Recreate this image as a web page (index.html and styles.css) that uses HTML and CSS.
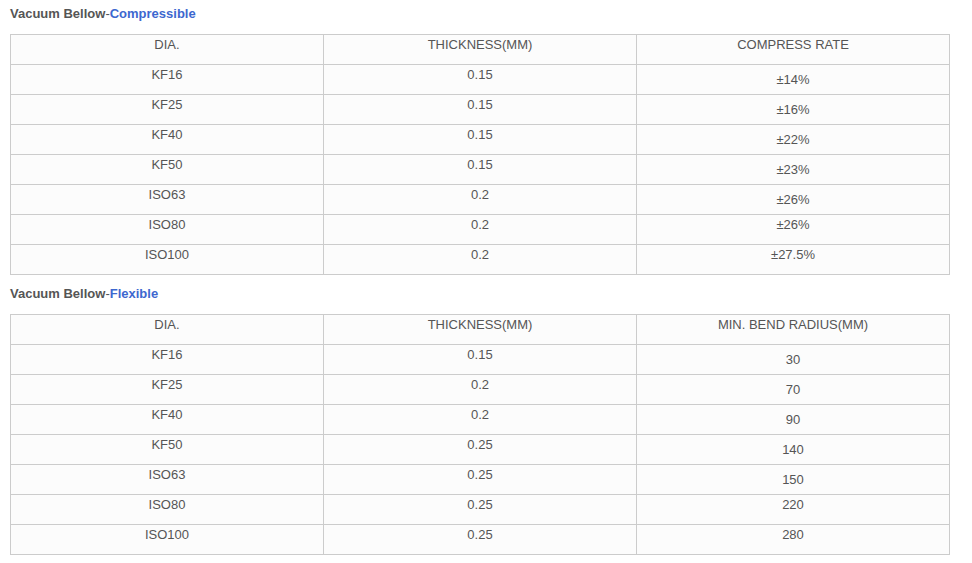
FILE: index.html
```html
<!DOCTYPE html>
<html>
<head>
<meta charset="utf-8">
<link rel="stylesheet" href="styles.css">
</head>
<body>
<div class="page">
  <h3 class="title">Vacuum Bellow<span class="dash">-</span><span class="accent">Compressible</span></h3>
  <table class="spec">
    <tr><td>DIA.</td><td>THICKNESS(MM)</td><td>COMPRESS RATE</td></tr>
    <tr><td>KF16</td><td>0.15</td><td class="low">±14%</td></tr>
    <tr><td>KF25</td><td>0.15</td><td class="low">±16%</td></tr>
    <tr><td>KF40</td><td>0.15</td><td class="low">±22%</td></tr>
    <tr><td>KF50</td><td>0.15</td><td class="low">±23%</td></tr>
    <tr><td>ISO63</td><td>0.2</td><td class="low">±26%</td></tr>
    <tr><td>ISO80</td><td>0.2</td><td>±26%</td></tr>
    <tr><td>ISO100</td><td>0.2</td><td>±27.5%</td></tr>
  </table>
  <h3 class="title">Vacuum Bellow<span class="dash">-</span><span class="accent">Flexible</span></h3>
  <table class="spec">
    <tr><td>DIA.</td><td>THICKNESS(MM)</td><td>MIN. BEND RADIUS(MM)</td></tr>
    <tr><td>KF16</td><td>0.15</td><td class="low">30</td></tr>
    <tr><td>KF25</td><td>0.2</td><td class="low">70</td></tr>
    <tr><td>KF40</td><td>0.2</td><td class="low">90</td></tr>
    <tr><td>KF50</td><td>0.25</td><td class="low">140</td></tr>
    <tr><td>ISO63</td><td>0.25</td><td class="low">150</td></tr>
    <tr><td>ISO80</td><td>0.25</td><td>220</td></tr>
    <tr><td>ISO100</td><td>0.25</td><td>280</td></tr>
  </table>
</div>
</body>
</html>
```
FILE: styles.css
```css
html, body {
  margin: 0;
  padding: 0;
  background: #ffffff;
}
.page {
  padding: 6px 23px 0 10px;
  font-family: "Liberation Sans", Arial, sans-serif;
  color: #555555;
}
.title {
  margin: 0;
  height: 28px;
  font-size: 13px;
  line-height: 16px;
  font-weight: bold;
  color: #555555;
}
.dash {
  font-weight: normal;
}
.accent {
  color: #3d67cf;
}
.spec {
  width: 940px;
  border-collapse: collapse;
  table-layout: fixed;
  background: #fcfcfc;
  margin-bottom: 11px;
}
.spec td {
  border: 1px solid #cccccc;
  height: 29px;
  padding: 0;
  vertical-align: top;
  text-align: center;
  font-size: 13px;
  line-height: 20px;
  color: #555555;
}
.spec td.low {
  padding-top: 5px;
  height: 24px;
}
```
